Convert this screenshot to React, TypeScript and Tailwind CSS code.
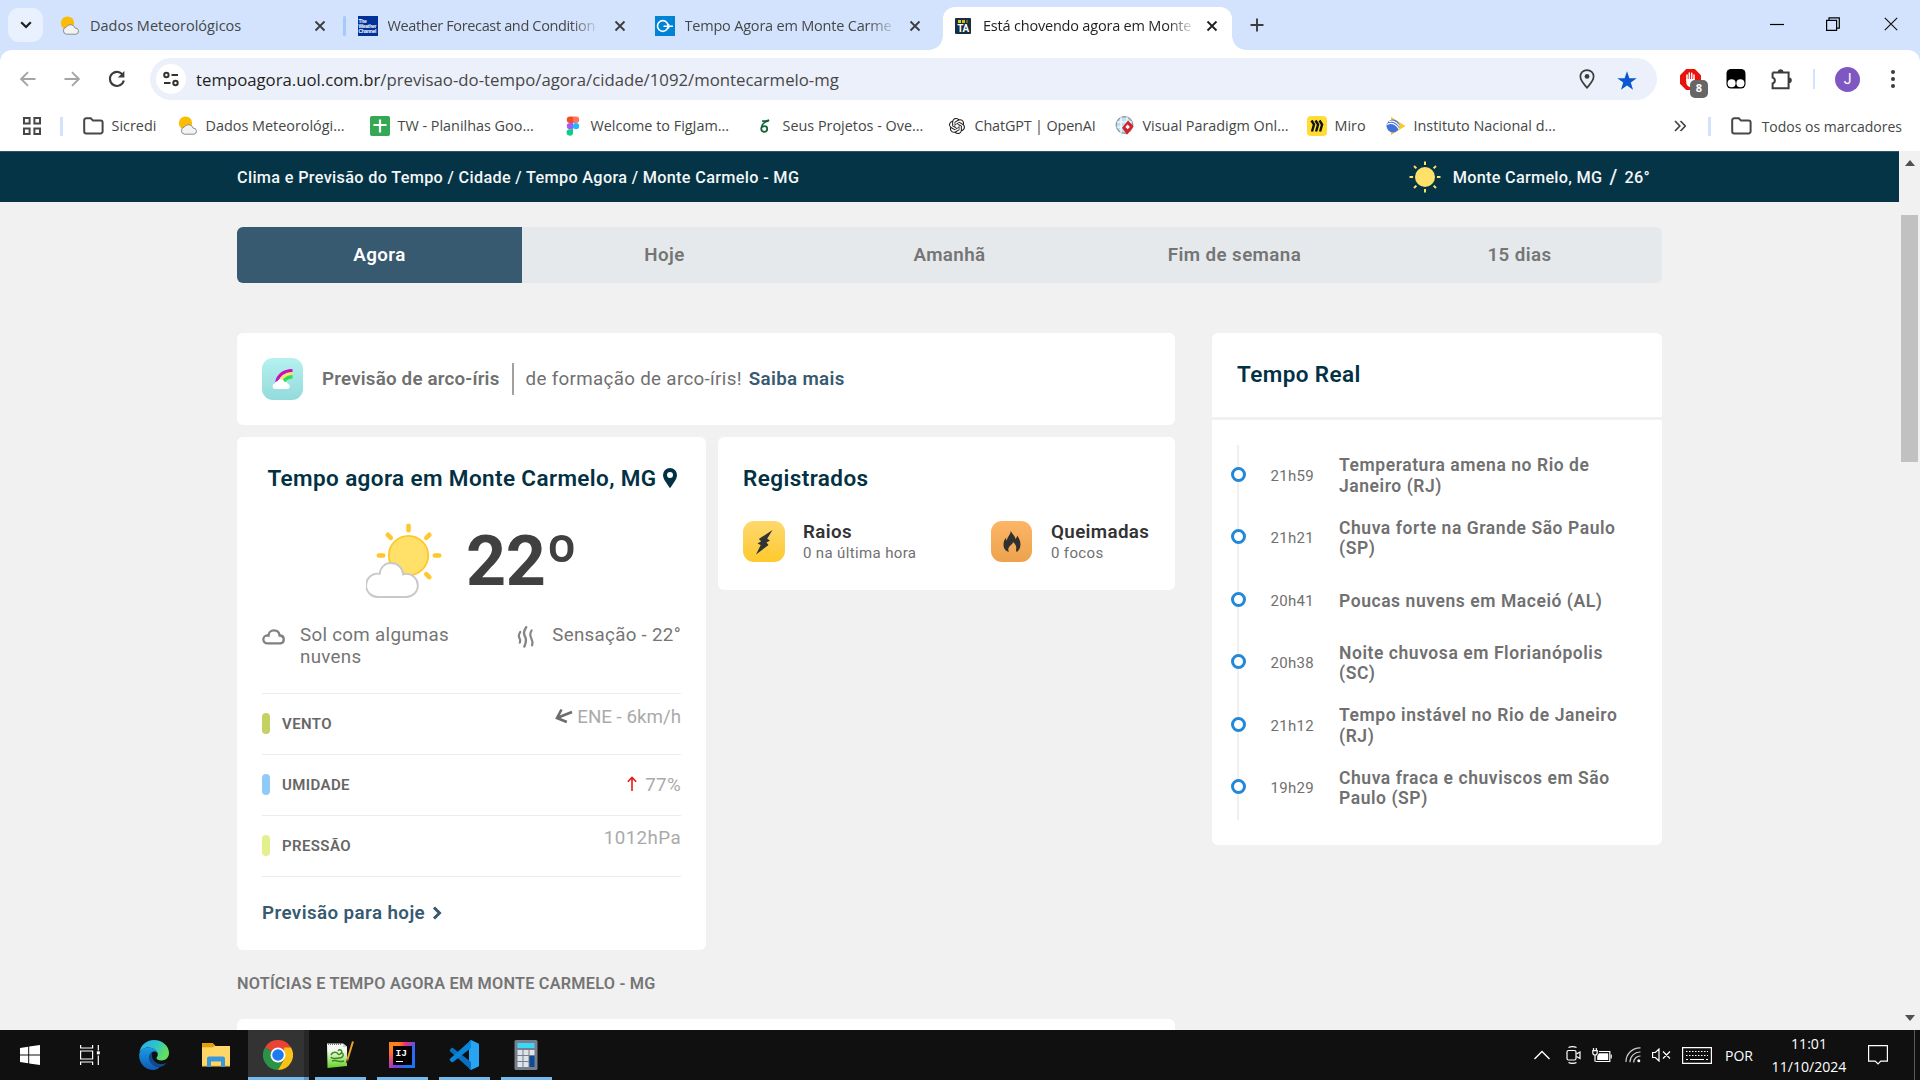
import type { ReactNode } from 'react';
import { SiOpenai } from 'react-icons/si';

const UI = "font-['Open_Sans',sans-serif]";

/* ---------- small drawings ---------- */

function SunCloudFavicon() {
  return (
    <svg viewBox="0 0 20 20" className="h-5 w-5 shrink-0">
      <circle cx="7.5" cy="7" r="6.600" fill="#fbbc04" />
      <path d="M6.500 18.200a3.600 3.600 0 0 1-.2-7.100 4.800 4.800 0 0 1 8.800 1 3.100 3.100 0 0 1 1 6.100z" fill="#f3f3f3" stroke="#8d8d8d" strokeWidth="1" />
    </svg>
  );
}

function CloseX({ className = 'text-[#3c3c3c]' }: { className?: string }) {
  return (
    <svg viewBox="0 0 12 12" className={'h-3 w-3 shrink-0 ' + className}>
      <path d="M1.500 1.500l9 9M10.500 1.500l-9 9" stroke="currentColor" strokeWidth="1.800" />
    </svg>
  );
}

function Folder() {
  return (
    <svg viewBox="0 0 21 18" className="h-[18px] w-[21px] shrink-0">
      <path d="M1.200 3.200a2 2 0 0 1 2-2h4.600l2.200 2.400h7.600a2 2 0 0 1 2 2v8.800a2 2 0 0 1-2 2H3.200a2 2 0 0 1-2-2z" fill="none" stroke="#474747" strokeWidth="2" />
    </svg>
  );
}

function WeatherChannel() {
  return (
    <div className="flex h-5 w-5 shrink-0 flex-col justify-center bg-[#003399] pl-px font-['Liberation_Sans',sans-serif] text-[5px] leading-[5px] font-bold tracking-[-0.3px] text-white">
      <span>The</span>
      <span>Weather</span>
      <span>Channel</span>
    </div>
  );
}

function Climatempo() {
  return (
    <svg viewBox="0 0 20 20" className="h-5 w-5 shrink-0">
      <path d="M0 0h20v20H0z" fill="#0083d4" />
      <circle cx="7.800" cy="10" r="5.300" fill="none" stroke="#fff" strokeWidth="1.700" />
      <path d="M8.500 10.300H18M13.600 8v4.600" stroke="#fff" strokeWidth="1.500" />
    </svg>
  );
}

function TempoAgoraIcon() {
  return (
    <div className="flex h-4 w-4 shrink-0 flex-col items-center overflow-hidden rounded-[1px] bg-[#12303f]">
      <div className="mt-[2px] flex gap-px">
        <i className="h-[3px] w-[3px] bg-[#f5c518]" />
        <i className="h-[3px] w-[3px] bg-[#e0b418]" />
        <i className="h-[3px] w-[2px] bg-[#6a6428]" />
      </div>
      <span className="mt-px font-['Roboto',sans-serif] text-[10px] leading-[10px] font-bold tracking-[-0.4px] text-white">TA</span>
    </div>
  );
}

function PartlyCloudy() {
  return (
    <svg viewBox="0 0 76 76" className="h-[76px] w-[76px] shrink-0">
      <g stroke="#ffc72e" strokeWidth="4.600" strokeLinecap="round">
        <path d="M42.500 2.800v4.400M21.800 11.800l3 3M63.300 11.800l-3 3M12.800 32.500h4.400M68.800 32.500h4.400M60.300 51.200l3 3" />
      </g>
      <circle cx="42.500" cy="32.500" r="19.700" fill="#ffe169" stroke="#ffc72e" strokeWidth="1.800" />
      <path d="M12 74a11.500 11.500 0 0 1-.5-23.400c1.200 0 1.500 0 2.200.2C14.500 44 19 40 25.300 40c6.200 0 11.400 4.800 11.900 11.400 1-.4 2-.5 3.300-.5A11.500 11.500 0 0 1 40 74z" fill="#fff" stroke="#c8c8c8" strokeWidth="1.900" />
    </svg>
  );
}

function HeaderSun() {
  return (
    <svg viewBox="0 0 32 32" className="h-8 w-8 shrink-0">
      <circle cx="16" cy="16" r="10" fill="#ffe169" />
      <path d="M16 .5v3.600M16 27.900v3.600M.5 16h3.600M27.900 16h3.600M5 5l2.400 2.400M24.600 24.600L27 27M27 5l-2.400 2.400M7.400 24.600L5 27" stroke="#ffe169" strokeWidth="2" />
    </svg>
  );
}

function CloudOutline() {
  return (
    <svg viewBox="0 0 24 18" className="h-[18px] w-6 shrink-0">
      <path d="M5.500 15.400a4 4 0 0 1-.3-8c.7 0 1 .1 1.300.2A5.400 5.400 0 0 1 12 2.400c3 0 5.200 2 5.600 5.100h.8a4 4 0 0 1 0 7.900z" fill="none" stroke="#808080" strokeWidth="2.300" />
    </svg>
  );
}

function HeatWaves() {
  return (
    <svg viewBox="0 0 18 22" className="h-[22px] w-[18px] shrink-0">
      <g fill="none" stroke="#858585" strokeLinecap="round">
        <path d="M3.200 6C1.200 9.200 1.400 10.500 2.600 12.500c.8 1.400.8 2.600.2 4.200" strokeWidth="2.200" />
        <path d="M9.200 1.200C6.300 6 6.600 8 8.200 11c1.300 2.600 1.200 5-.8 9.600" strokeWidth="2.400" />
        <path d="M14.600 4.500c-2 3.200-1.800 4.900-.5 7.300 1.300 2.500 1.900 4.400 1 7.600" strokeWidth="2.200" />
      </g>
    </svg>
  );
}

function RainbowBadge() {
  return (
    <div className="flex h-[42px] w-[41px] shrink-0 items-center justify-center rounded-[11px] bg-linear-to-b from-[#b5f1ef] to-[#93dbdb]">
      <svg viewBox="0 0 24 24" className="h-6 w-6">
        <path d="M5.500 15.500C7 9 12 4 21.500 3.600" fill="none" stroke="#cc0fb4" strokeWidth="3" />
        <path d="M8.600 15.500C10 11 14.500 7 21.500 6.600" fill="none" stroke="#fbe36a" strokeWidth="3" />
        <path d="M12 15.500C14 12 17 10 21.500 9.800" fill="none" stroke="#2ee04e" strokeWidth="3.400" />
        <path d="M3.500 22a2.800 2.800 0 0 1 .2-5.400c.8-2 2-2.700 3-2.700.5-2.100 5.600-2.400 6.600.8 2.300-.2 3.500 1.400 3.600 2.400 2.700.5 2.600 4.500 0 4.900z" fill="#fff" />
      </svg>
    </div>
  );
}

/* ---------- browser chrome ---------- */

function Tab({ icon, title }: { icon: ReactNode; title: string }) {
  return (
    <div className="flex h-full w-[297.5px] items-center pt-0.5 pl-3">
      {icon}
      <span className="ml-2.5 w-[208px] text-[14.5px] whitespace-nowrap text-[#444746]">{title}</span>
      <CloseX className="ml-[18px] text-[#3c3c3c]" />
      <i className="ml-[17px] h-5 w-[2.5px] rounded bg-[#a8c7fa]" />
    </div>
  );
}

function Faded({ children, className = '' }: { children: ReactNode; className?: string }) {
  return (
    <span className={'block tracking-[-0.2px] [mask-image:linear-gradient(to_right,black_88%,transparent_102%)] ' + className}>{children}</span>
  );
}

function TabStrip() {
  return (
    <div className="flex h-[50px] bg-[#d3e3fd]">
      <div className="mt-2 ml-2 flex h-[34px] w-[35px] items-center justify-center rounded-[11px] bg-[#e9f1fe]">
        <svg viewBox="0 0 12 8" className="h-2 w-3"><path d="M1.200 1.200L6 6l4.800-4.800" fill="none" stroke="#1f1f1f" strokeWidth="2.200" /></svg>
      </div>
      <div className="ml-[5px] flex h-[50px]">
        <Tab icon={<SunCloudFavicon />} title="Dados Meteorológicos" />
        <div className="flex h-full w-[297px] items-center pt-0.5 pl-3">
          <WeatherChannel />
          <span className="ml-2.5 w-[208px] text-[14.5px] whitespace-nowrap text-[#444746]"><Faded className="w-[208px] tracking-[-0.35px]">Weather Forecast and Condition</Faded></span>
          <CloseX className="ml-[18px] text-[#3c3c3c]" />
          <i className="ml-[17px] h-5 w-[2.5px] rounded bg-[#a8c7fa]" />
        </div>
        <div className="flex h-full w-[295.5px] items-center pt-0.5 pl-3">
          <Climatempo />
          <span className="ml-2.5 w-[208px] text-[14.5px] whitespace-nowrap text-[#444746]"><Faded className="w-[208px]">Tempo Agora em Monte Carme</Faded></span>
          <CloseX className="ml-[16px] text-[#3c3c3c]" />
        </div>
      </div>
      <div className="relative mt-[7px] ml-[5px] flex h-[43px] w-[289px] items-center rounded-t-xl bg-white pb-[5px] pl-3">
        <i className="absolute bottom-0 -left-[14px] h-[14px] w-[14px] bg-[radial-gradient(circle_at_0_0,transparent_13.5px,white_14px)]" />
        <i className="absolute -right-[14px] bottom-0 h-[14px] w-[14px] bg-[radial-gradient(circle_at_100%_0,transparent_13.5px,white_14px)]" />
        <TempoAgoraIcon />
        <span className="ml-3 w-[209px] text-[14.5px] whitespace-nowrap text-[#1f1f1f]"><Faded className="w-[209px]">Está chovendo agora em Monte</Faded></span>
        <CloseX className="ml-[14px] text-[#1f1f1f]" />
      </div>
      <svg viewBox="0 0 14 14" className="mt-[18px] ml-[18px] h-3.5 w-3.5"><path d="M7 .5v13M.5 7h13" stroke="#3c3c3c" strokeWidth="1.900" /></svg>
      <div className="ml-auto flex items-start pt-[17px] pr-[22px]">
        <svg viewBox="0 0 14 14" className="h-3.5 w-3.5"><path d="M0 7.500h14" stroke="#000" strokeWidth="1.200" /></svg>
        <svg viewBox="0 0 14 14" className="ml-[42px] h-3.5 w-3.5"><path d="M.6 3.400h10v10H.6zM3 3.400V.9h10.300v10.200h-2.700" fill="none" stroke="#000" strokeWidth="1.200" /></svg>
        <svg viewBox="0 0 14 14" className="ml-11 h-3.5 w-3.5"><path d="M.8 .8l12.400 12.400M13.200 .8L.8 13.200" stroke="#111" strokeWidth="1.200" /></svg>
      </div>
    </div>
  );
}

function Toolbar() {
  return (
    <div className="bg-[#d3e3fd]">
      <div className="flex h-[58px] items-center rounded-t-xl bg-white">
        <svg viewBox="0 0 16 16" className="ml-5 h-4 w-4"><path d="M15.500 8H1.500M8 1.200L1.200 8 8 14.800" fill="none" stroke="#a5a5a5" strokeWidth="1.900" /></svg>
        <svg viewBox="0 0 16 16" className="ml-[28px] h-4 w-4"><path d="M.5 8h14M8 1.200L14.800 8 8 14.800" fill="none" stroke="#a5a5a5" strokeWidth="1.900" /></svg>
        <svg viewBox="0 0 18 18" className="ml-7 h-[18px] w-[18px]"><path d="M15.200 5.700A7 7 0 1 0 15.800 10.500" fill="none" stroke="#3c3c3c" strokeWidth="2.100" /><path d="M16.400 1v6.600H9.800z" fill="#3c3c3c" /></svg>
        <div className="ml-6 flex h-[42px] w-[1507px] items-center rounded-full bg-[#ecf0fa]">
          <div className="ml-1.5 flex h-[30px] w-[30px] items-center justify-center rounded-full bg-white">
            <svg viewBox="0 0 16 16" className="h-4 w-4"><g fill="none" stroke="#333" strokeWidth="2"><circle cx="3.400" cy="4" r="2.200" /><path d="M8.500 4H15M1 12h6.500" /><circle cx="12.500" cy="12" r="2.200" /></g></svg>
          </div>
          <span className="mt-0.5 ml-2.5 text-[16.75px] whitespace-nowrap text-[#474747]"><span className="text-[#1f1f1f]">tempoagora.uol.com.br</span>/previsao-do-tempo/agora/cidade/1092/montecarmelo-mg</span>
          <svg viewBox="0 0 16 20" className="ml-auto h-5 w-4"><path d="M8 1.100c-3.800 0-6.600 2.800-6.600 6.400C1.400 11.800 5 15 8 18.800c3-3.800 6.600-7 6.600-11.300 0-3.600-2.800-6.400-6.600-6.400z" fill="none" stroke="#3c3c3c" strokeWidth="1.700" /><circle cx="8" cy="7.400" r="2.400" fill="#3c3c3c" /></svg>
          <svg viewBox="0 0 20 20" className="mt-1 mr-5 ml-[22px] h-5 w-5"><path d="M10 .3l2.400 6.900h7.300l-5.900 4.400 2.200 7.100L10 14.400l-6 4.300 2.200-7.100L.3 7.200h7.300z" fill="#0b57d0" /></svg>
        </div>
        <div className="relative ml-[23px] h-[21px] w-[21px]">
          <svg viewBox="0 0 21 21" className="h-[21px] w-[21px]"><path d="M6.200 0h8.600L21 6.200v8.600L14.800 21H6.200L0 14.800V6.200z" fill="#e8140c" /><path d="M7 11V6M9.300 10V4M11.700 10V4.300M14 10V6" stroke="#fff" strokeWidth="1.500" strokeLinecap="round" /><path d="M6.200 10h8.600v3.500c0 2.500-1.700 4.500-4.300 4.500s-4.300-2.500-4.300-5z" fill="#fff" /></svg>
          <div className="absolute top-[11px] left-[10px] flex h-[18px] w-[18px] items-center justify-center rounded-[5px] bg-[#666] text-[11px] font-bold text-white">8</div>
        </div>
        <svg viewBox="0 0 20 20" className="ml-[25px] h-5 w-5"><rect x=".5" width="19" height="19.500" rx="4.500" fill="#000" /><circle cx="5.600" cy="14.200" r="4" fill="#fff" /><circle cx="14.400" cy="14.200" r="4" fill="#fff" /></svg>
        <svg viewBox="0 0 22 22" className="ml-[25px] h-[22px] w-[22px]"><path d="M1.600 4.600h16v4.200M17.600 14.600v5.600h-16v-4.800a3 3 0 0 0 0-5.800V4.600M17.600 8v8" fill="none" stroke="#3c3c3c" strokeWidth="2" /><path d="M6.800 4a2.800 2.800 0 0 1 5.600 0zM18 9.400a2.800 2.800 0 0 1 0 5.600z" fill="#3c3c3c" /></svg>
        <i className="ml-5 h-5 w-0.5 bg-[#d3e3fd]" />
        <div className="ml-5 flex h-[25px] w-[25px] items-center justify-center rounded-full bg-[#7e57c2] font-['Roboto',sans-serif] text-[14px] text-white">J</div>
        <svg viewBox="0 0 4 18" className="ml-[31px] h-[18px] w-1"><g fill="#3c3c3c"><circle cx="2" cy="2" r="2" /><circle cx="2" cy="9" r="2" /><circle cx="2" cy="16" r="2" /></g></svg>
      </div>
    </div>
  );
}

function Bookmark({ icon, label, width }: { icon: ReactNode; label: string; width: string }) {
  return (
    <div className={'flex shrink-0 items-center text-[14.4px] whitespace-nowrap text-[#444746] ' + width}>
      <span className="mr-2 flex w-5 justify-center">{icon}</span>
      {label}
    </div>
  );
}

function BookmarksBar() {
  return (
    <div className="flex h-[43px] items-center bg-white pb-[7px]">
      <svg viewBox="0 0 18 18" className="ml-[23px] h-[18px] w-[18px] shrink-0"><g fill="none" stroke="#474747" strokeWidth="2"><path d="M1 1h5.600v5.600H1zM11.400 1H17v5.600h-5.600zM1 11.400h5.600V17H1zM11.400 11.400H17V17h-5.600z" /></g></svg>
      <i className="ml-[19px] h-[19px] w-[2.5px] bg-[#d3e3fd]" />
      <div className="ml-[19px] flex items-center">
        <Bookmark icon={<Folder />} label="Sicredi" width="w-[96px] pl-0.5" />
        <Bookmark icon={<SunCloudFavicon />} label="Dados Meteorológi..." width="w-[192px]" />
        <Bookmark
          icon={<svg viewBox="0 0 20 20" className="h-5 w-5"><rect width="20" height="20" rx="2" fill="#34a853" /><path d="M10 3.500v13M3.500 9h13" stroke="#fff" strokeWidth="2.200" /></svg>}
          label="TW - Planilhas Goo..." width="w-[193px]"
        />
        <Bookmark
          icon={<svg viewBox="0 0 14 20" className="h-5 w-3.5"><path d="M7 .5H4a3.200 3.200 0 0 0 0 6.400h3z" fill="#f24e1e" /><path d="M7 .5h3a3.200 3.200 0 0 1 0 6.400H7z" fill="#ff7262" /><path d="M7 6.900H4a3.200 3.200 0 0 0 0 6.400h3z" fill="#a259ff" /><circle cx="10" cy="10.100" r="3.200" fill="#1abcfe" /><path d="M7 13.300H4A3.200 3.200 0 1 0 7 16.500z" fill="#0acf83" /></svg>}
          label="Welcome to FigJam..." width="w-[192px]"
        />
        <Bookmark
          icon={<svg viewBox="0 0 14 18" className="h-[14px] w-[11px]"><path d="M12.500 2.500C7 3.500 3 7.500 2.800 12c0 3 1.600 4.500 3.700 4.500 2.400 0 4-1.800 4-4 0-2-1.400-3.400-3.300-3.400-1.200 0-2.400.6-3.100 1.500M4 2.200c2 1 5 1 9-.8" fill="none" stroke="#13643a" strokeWidth="2.300" /></svg>}
          label="Seus Projetos - Ove..." width="w-[192px]"
        />
        <div className="tracking-[-0.15px]">
          <Bookmark icon={<SiOpenai className="h-4 w-4 text-[#202020]" />} label="ChatGPT | OpenAI" width="w-[168px]" />
        </div>
        <Bookmark
          icon={<svg viewBox="0 0 20 20" className="h-5 w-5"><circle cx="9.500" cy="9" r="8.300" fill="#b9e2f7" stroke="#8f8f8f" strokeWidth="1.200" /><path d="M1.500 6h16M1.500 11h16M6 1v16M12 1v16" stroke="#fff" strokeWidth="1.100" /><path d="M13 4.600l5.600 5.600-6.600 8.600-5-7z" fill="#d2232a" /><path d="M12.600 8.600l2.300 2.300-2.300 2.300-2.200-2.300z" fill="#fff" /></svg>}
          label="Visual Paradigm Onl..." width="w-[192px]"
        />
        <Bookmark
          icon={<svg viewBox="0 0 20 20" className="h-5 w-5"><rect width="20" height="20" rx="4" fill="#ffdd33" /><path d="M4.500 4.500l2.500 4-2 7M8.500 4.500l2.600 4-2 7M12.500 4.500l2.600 4-2 7" fill="none" stroke="#111" strokeWidth="2.400" /></svg>}
          label="Miro" width="w-[79px]"
        />
        <Bookmark
          icon={<svg viewBox="0 0 20 20" className="h-5 w-5"><path d="M5 1l14.500 9L5 19z" fill="#f7c92b" /><circle cx="7" cy="10" r="6.500" fill="#4472d8" /><path d="M1 8.500c5-2.500 9 0 12 4.500M3 5.500c5-1.500 8 1 10.500 5" fill="none" stroke="#fff" strokeWidth="1.200" /></svg>}
          label="Instituto Nacional d..." width="w-[200px]"
        />
      </div>
      <svg viewBox="0 0 12 12" className="mr-[22px] ml-auto h-3 w-3 shrink-0"><path d="M1 1l4.800 5L1 11M6.500 1l4.800 5-4.800 5" fill="none" stroke="#444" strokeWidth="1.700" /></svg>
      <i className="mr-5 h-[19px] w-[2.5px] bg-[#d3e3fd]" />
      <Folder />
      <span className="mr-[18px] ml-[10px] text-[14px] whitespace-nowrap text-[#444746]">Todos os marcadores</span>
    </div>
  );
}

/* ---------- weather page ---------- */

const NEWS = [
  { time: '21h59', text: 'Temperatura amena no Rio de Janeiro (RJ)' },
  { time: '21h21', text: 'Chuva forte na Grande São Paulo (SP)' },
  { time: '20h41', text: 'Poucas nuvens em Maceió (AL)' },
  { time: '20h38', text: 'Noite chuvosa em Florianópolis (SC)' },
  { time: '21h12', text: 'Tempo instável no Rio de Janeiro (RJ)' },
  { time: '19h29', text: 'Chuva fraca e chuviscos em São Paulo (SP)' },
];

function RealTime() {
  return (
    <aside className="ml-[37px] h-[512px] w-[450px] rounded-[6px] bg-white">
      <h2 className="flex h-[87px] items-center border-b-[3px] border-[#f1f1f1] pb-px pl-[25px] text-[22.5px] font-semibold tracking-[0.4px] text-[#033144]">Tempo Real</h2>
      <div className="mt-[25px] ml-[25px] border-l-2 border-[#efefef]">
        {NEWS.map((n) => (
          <div key={n.text} className="flex h-[62.5px] items-center">
            <i className="relative -top-[2px] -ml-[8.5px] h-[15px] w-[15px] rounded-full border-[3px] border-[#2488d8] bg-white" />
            <span className="ml-[25px] w-[68.5px] pb-px text-[15px] tracking-[0.3px] text-[#707070]">{n.time}</span>
            <span className="w-[300px] pb-px text-[17.5px] leading-[20.5px] font-semibold tracking-[0.56px] text-[#707070]">{n.text}</span>
          </div>
        ))}
      </div>
    </aside>
  );
}

function DataRow({ color, label, children }: { color: string; label: string; children: ReactNode }) {
  return (
    <div className="flex h-[61px] border-t border-[#ececec]">
      <i className={'mt-[19px] h-[21px] w-2 rounded-full ' + color} />
      <span className="mt-[20px] ml-3 text-[15px] leading-5 font-semibold tracking-[0.4px] text-[#666]">{label}</span>
      <div className="ml-auto flex text-[18.75px] leading-[22px] text-[#aaa]">{children}</div>
    </div>
  );
}

function CurrentCard() {
  return (
    <section className="h-[513px] w-[469px] rounded-[6px] bg-white px-[25px]">
      <h1 className="flex items-center justify-center gap-[6px] pt-[27px] pl-[1px] text-[22.5px] leading-7 font-semibold tracking-[0.38px] whitespace-nowrap text-[#033144]">
        Tempo agora em Monte Carmelo, MG
        <svg viewBox="0 0 14 20" className="h-5 w-3.5"><path fillRule="evenodd" d="M7 0a7 7 0 0 0-7 7c0 2.600 1.200 4.600 2.600 6.800L6.400 19.600a.75.75 0 0 0 1.200 0l3.800-5.800C12.800 11.600 14 9.600 14 7a7 7 0 0 0-7-7zM7 4a3 3 0 1 1 0 6 3 3 0 0 1 0-6z" fill="#033144" /></svg>
      </h1>
      <div className="mt-[31px] ml-[104px] flex h-[76px]">
        <PartlyCloudy />
        <span className="-mt-[3px] ml-[24px] text-[70px] leading-[82px] font-bold tracking-[-0.3px] text-[#404040]">22º</span>
      </div>
      <div className="mt-[26px] flex h-[57px] text-[18.75px] leading-[21.5px] tracking-[0.3px] text-[#757575]">
        <div className="mt-[3px]"><CloudOutline /></div>
        <p className="ml-3.5 w-[160px]">Sol com algumas nuvens</p>
        <div className="mt-[1px] ml-[57px]"><HeatWaves /></div>
        <p className="ml-auto whitespace-nowrap">Sensação - 22°</p>
      </div>
      <div className="mt-[11px] border-b border-[#ececec]">
        <DataRow color="bg-[#c5d163]" label="VENTO">
          <svg viewBox="0 0 18 16" className="mt-3.5 mr-1 h-4 w-[18px]"><path d="M6.500 1.500L2 10l9.800 4M2.500 9.800L17 4" fill="none" stroke="#6c6c6c" strokeWidth="2.600" /></svg>
          <span className="mt-3">ENE - 6km/h</span>
        </DataRow>
        <DataRow color="bg-[#90caf9]" label="UMIDADE">
          <svg viewBox="0 0 10 15" className="mt-[21px] mr-2 h-[15px] w-2.5"><path d="M5 15V1.500M.8 5.800L5 1.400l4.200 4.400" fill="none" stroke="#e31b1b" strokeWidth="1.600" /></svg>
          <span className="mt-[19px] tracking-[0.3px]">77%</span>
        </DataRow>
        <DataRow color="bg-[#e4f08c]" label="PRESSÃO">
          <span className="mt-[11px] tracking-[0.4px]">1012hPa</span>
        </DataRow>
      </div>
      <a className="mt-[24px] flex items-center text-[18.75px] leading-6 font-semibold tracking-[0.42px] text-[#375a70]">
        Previsão para hoje
        <svg viewBox="0 0 10 14" className="ml-[7px] h-3.5 w-2.5"><path d="M2 1.500L7.500 7 2 12.500" fill="none" stroke="#375a70" strokeWidth="3" /></svg>
      </a>
    </section>
  );
}

function Recorded() {
  return (
    <section className="ml-3 h-[153px] w-[457px] rounded-[6px] bg-white px-[25px] pt-[27px]">
      <h2 className="text-[22.5px] leading-7 font-semibold tracking-[0.42px] text-[#033144]">Registrados</h2>
      <div className="mt-[28px] flex">
        <div className="flex w-[248px]">
          <div className="mt-px flex h-[41px] w-[42px] items-center justify-center rounded-[11px] bg-linear-to-b from-[#fdd96b] to-[#fec928]">
            <svg viewBox="0 0 18 26" className="h-[26px] w-[18px]"><path d="M17.500 1L3.800 10l2.400 2.200L2.500 14.500l3.200 1.500L1 25.500l12.500-9.500-2-2.400L15 11.400l-2.800-1.600z" fill="#333" /></svg>
          </div>
          <div className="mt-px ml-[18px]">
            <p className="text-[18.75px] leading-[22px] font-semibold tracking-[0.4px] text-[#333]">Raios</p>
            <p className="text-[15px] leading-5 tracking-[0.36px] text-[#707070]">0 na última hora</p>
          </div>
        </div>
        <div className="mt-px flex h-[41px] w-[41px] items-center justify-center rounded-[11px] bg-linear-to-b from-[#fdb566] to-[#eda34d]">
          <svg viewBox="0 0 18 23" className="h-[23px] w-[18px]"><path d="M7.800.5c.5 3 4.200 5 4.700 8.500.9-.9 1.500-2 1.600-3.500 2 2.400 3.400 5.700 3.400 9 0 3.800-1.700 6-3.700 7.600-.8-.9-.9-2-.6-3.500.4-2.700-1-4.700-3.200-6.600.1 2.500-4.700 4-4.700 7.500 0 1 .2 1.800.5 2.600C2.700 20.700.5 18.600.5 14.700c0-3.200 1-5 2.300-7 .1 1.200.4 2 1.100 2.700C4.300 6.500 8 4.500 7.800.5z" fill="#303030" /></svg>
        </div>
        <div className="mt-px ml-[19px]">
          <p className="text-[18.75px] leading-[22px] font-semibold tracking-[0.37px] text-[#333]">Queimadas</p>
          <p className="text-[15px] leading-5 tracking-[0.35px] text-[#707070]">0 focos</p>
        </div>
      </div>
    </section>
  );
}

function WeatherPage() {
  return (
    <div className="flex h-[879px] bg-[#f1f1f1]">
      <main className="flex h-[879px] w-[1899px] flex-col overflow-hidden font-['Roboto',sans-serif]">
        <header className="flex h-[51px] shrink-0 items-center border-t border-[#2c5464] bg-[#043446] pl-[237px] text-[16.25px] font-medium tracking-[0.32px] text-[#f4f6f7]">
          <span className="mt-0.5">Clima e Previsão do Tempo / Cidade / Tempo Agora / Monte Carmelo - MG</span>
          <div className="mr-[249px] ml-auto flex items-center tracking-[0.28px]">
            <HeaderSun />
            <span className="mt-0.5 ml-3">Monte Carmelo, MG</span>
            <span className="mx-[7px] text-[20px] leading-6">/</span>
            <span className="mt-0.5">26°</span>
          </div>
        </header>
        <div className="ml-[237px] w-[1425px]">
          <nav className="mt-[25px] grid h-14 grid-cols-5 overflow-hidden rounded-[6px] bg-[#e5e9ec] text-center text-[18.75px] leading-[57px] font-semibold tracking-[0.4px] text-[#757575]">
            <span className="bg-[#375a70] text-white">Agora</span>
            <span>Hoje</span>
            <span>Amanhã</span>
            <span>Fim de semana</span>
            <span>15 dias</span>
          </nav>
          <div className="mt-[50px] flex items-start">
            <div className="w-[938px]">
              <section className="flex h-[92px] items-center rounded-[6px] bg-white pl-[25px] text-[18.75px] tracking-[0.33px] whitespace-nowrap text-[#707070]">
                <RainbowBadge />
                <span className="ml-[19px] font-semibold tracking-[0.2px]">Previsão de arco-íris</span>
                <i className="ml-3 h-8 w-0.5 bg-[#a0a0a0]" />
                <span className="ml-3">de formação de arco-íris!</span>
                <span className="ml-[7px] font-semibold text-[#375a70]">Saiba mais</span>
              </section>
              <div className="mt-3 flex items-start">
                <CurrentCard />
                <Recorded />
              </div>
              <h2 className="mt-[24px] text-[16.25px] leading-5 font-semibold tracking-[0.23px] text-[#757575]">NOTÍCIAS E TEMPO AGORA EM MONTE CARMELO - MG</h2>
              <section className="mt-[25px] h-20 rounded-[6px] bg-white" />
            </div>
            <RealTime />
          </div>
        </div>
      </main>
      <div className="flex w-[21px] flex-col items-center bg-[#f1f1f1]">
        <svg viewBox="0 0 10 6" className="mt-[9px] h-1.5 w-2.5 shrink-0"><path d="M5 0l5 6H0z" fill="#505050" /></svg>
        <div className="mt-[49px] h-[247px] w-[17px] shrink-0 bg-[#c1c1c1]" />
        <svg viewBox="0 0 10 6" className="mt-auto mb-[9px] h-1.5 w-2.5"><path d="M0 0h10L5 6z" fill="#505050" /></svg>
      </div>
    </div>
  );
}

/* ---------- taskbar ---------- */

function EdgeIcon() {
  return (
    <svg viewBox="0 0 30 30" className="h-[30px] w-[30px]">
      <defs>
        <linearGradient id="edgeTop" x1="0" y1="0" x2="1" y2=".4"><stop offset="0" stopColor="#2fa8e8" /><stop offset=".55" stopColor="#2cc3cf" /><stop offset="1" stopColor="#63e05a" /></linearGradient>
        <linearGradient id="edgeLow" x1="0" y1="0" x2="0" y2="1"><stop offset="0" stopColor="#1b9de2" /><stop offset="1" stopColor="#0f59b5" /></linearGradient>
      </defs>
      <path d="M.4 13C1.300 5.500 7 0 15 0c8.500 0 15 6 15 13 0 4.500-3.300 7.500-7.500 7.500-3.200 0-5-1.300-5-2.300s1.300-1.400 1.300-3.900C18.800 10.500 14 7.500 9.500 7.500 5 7.500 1.500 10 .4 13z" fill="url(#edgeTop)" />
      <path d="M.2 15C.5 10.500 4.500 7.500 9.500 7.500c4.800 0 8.400 2.700 9.200 5.500-1.200-1.500-3.400-2-5-1.200-5 2.500-4.500 11.500 3.500 14.700 1 .4 2.300.6 3.300.5C18.800 29.200 16.500 30 14.500 30 6.500 30-.2 23.500.2 15z" fill="url(#edgeLow)" />
      <path d="M13.500 11.900c-5.500 2.600-4.600 12.300 4.200 14.900 3.800 1.100 7.500-.6 10-4-2 1-4.200 1.500-6.400 1.200-5.800-.5-10-6.500-7.800-12.100z" fill="#114a8b" />
    </svg>
  );
}

function ChromeIcon() {
  return (
    <svg viewBox="0 0 30 30" className="h-[30px] w-[30px]">
      <path d="M15 15L2 7.500A15 15 0 0 1 28 7.500z" fill="#ea4335" />
      <path d="M2 7.500A15 15 0 0 0 15 30l6.500-11.200L15 15z" fill="#2b9347" />
      <path d="M28 7.500A15 15 0 0 1 15 30l6.500-11.200L21 7.500z" fill="#fbc116" />
      <circle cx="15" cy="15" r="7.500" fill="#fff" />
      <circle cx="15" cy="15" r="5.800" fill="#1f7af0" />
    </svg>
  );
}

function NotepadIcon() {
  return (
    <svg viewBox="0 0 28 28" className="h-7 w-7">
      <defs><linearGradient id="npp" x1="0" y1="0" x2="0" y2="1"><stop offset=".3" stopColor="#f4f8f0" /><stop offset="1" stopColor="#5ed21f" /></linearGradient></defs>
      <path d="M1 2.500h16l4 3V25L1.500 27z" fill="url(#npp)" />
      <path d="M2 3h14" stroke="#777" strokeWidth="2.200" strokeDasharray="1 1" />
      <path d="M17 2.500v3.500h4z" fill="#ccc" />
      <path d="M5 14c2-4 6-3 7-1s4-3 5 0-2 4-4 4-7 2-8-1M6 20c4-2 7 2 12 0M12 10c2-3 5 0 3 2" fill="none" stroke="#3c8a1b" strokeWidth="1.500" />
      <path d="M27 .5L21 20" stroke="#e9a12c" strokeWidth="2" />
      <path d="M21.400 18.500l-1 3.500" stroke="#5b3b12" strokeWidth="1.300" />
    </svg>
  );
}

function IntelliJIcon() {
  return (
    <div className="flex h-[26px] w-[26px] items-center justify-center bg-[conic-gradient(from_-60deg,#fc801d,#fc801d_12%,#f0287a_22%,#3a62f5_32%,#1279f5_60%,#8a36e0_75%,#fc5a4a_90%,#fc801d)]">
      <div className="flex h-[19px] w-[19px] flex-col bg-black pt-[3px] pl-[3px] font-['Liberation_Mono',monospace] text-[9.5px] leading-[9px] font-bold text-white">
        IJ
        <i className="mt-[3px] h-px w-[7px] shrink-0 bg-white" />
      </div>
    </div>
  );
}

function VSCodeIcon() {
  return (
    <svg viewBox="0 0 30 30" className="h-[30px] w-[30px]">
      <path d="M22 0l7 3.200c.6.300 1 .8 1 1.500v20.600c0 .7-.4 1.200-1 1.500L22 30l-2-1.500v-27z" fill="#27a5f2" />
      <path d="M22 30L1 11.200c-.5-.5-.5-1.200 0-1.700l1.500-1.400c.5-.4 1-.4 1.500 0L22 22z" fill="#0a6fc0" />
      <path d="M22 0L1 18.800c-.5.500-.5 1.200 0 1.700l1.500 1.400c.5.400 1 .4 1.500 0L22 8z" fill="#0a86d8" />
    </svg>
  );
}

function CalculatorIcon() {
  return (
    <svg viewBox="0 0 24 30" className="h-[30px] w-6">
      <rect x=".5" width="23" height="30" rx="1.500" fill="#75808c" />
      <path d="M3.500 3h17v5h-17z" fill="#3fd5f8" />
      <g fill="#dfe4ea"><path d="M3.500 10h5v5h-5zM9.500 10h5v5h-5zM15.500 10h5v5h-5zM3.500 16h5v5h-5zM9.500 16h5v5h-5zM3.500 22h5v5h-5zM9.500 22h5v5h-5z" /></g>
      <path d="M15.500 16h5v11h-5z" fill="#0f4a94" />
    </svg>
  );
}

function RunningApp({ children }: { children: ReactNode }) {
  return (
    <div className="flex h-full w-[62px] flex-col items-center">
      <div className="flex h-[47px] items-center pt-[3px]">{children}</div>
      <i className="h-[3px] w-[51px] bg-[#76b9ed]" />
    </div>
  );
}

function Taskbar() {
  return (
    <footer className="flex h-[50px] bg-[#101010] text-white">
      <div className="flex w-[60px] items-center justify-center">
        <svg viewBox="0 0 20 20" className="h-5 w-5"><path d="M0 3l8.200-1.200v7.700H0zM9.200 1.600L20 0v9.500H9.200zM0 10.500h8.200v7.700L0 17zM9.200 10.500H20V20L9.200 18.400z" fill="#fff" /></svg>
      </div>
      <div className="flex w-[60px] items-center justify-center">
        <svg viewBox="0 0 20 20" className="h-5 w-5" fill="none" stroke="#fff" strokeWidth="1.200"><path d="M.6 0v3h12V0M.6 6h12v8H.6zM.6 20v-3h12v3M18.300 0v5.500M18.300 10.500V20" /><path d="M16.800 6.300h3v3h-3z" fill="#fff" stroke="none" /></svg>
      </div>
      <div className="flex w-[68px] items-center justify-center"><EdgeIcon /></div>
      <div className="flex w-[60px] items-center justify-center pr-1">
        <svg viewBox="0 0 28 24" className="h-6 w-7"><path d="M0 0h10.500l3 3H28v20.500H0z" fill="#ffc83d" /><path d="M0 0h10.500l2.500 2.500L11 4.500H0z" fill="#e3a008" /><path d="M0 4.500h11l2-1.500h15v19H0z" fill="#ffd766" /><path d="M5 24V15.500A2 2 0 0 1 7 13.500h14a2 2 0 0 1 2 2V24h-4v-5.500H9V24z" fill="#3a96dd" /></svg>
      </div>
      <div className="flex w-[61px]">
        <div className="flex h-full w-14 flex-col border-b-[3px] border-[#76b9ed] bg-[#333] pt-[10px] pl-[15px]"><ChromeIcon /></div>
        <div className="h-full w-[5px] border-b-[3px] border-[#5f95c0] bg-[#272727]" />
      </div>
      <RunningApp><NotepadIcon /></RunningApp>
      <RunningApp><IntelliJIcon /></RunningApp>
      <RunningApp><VSCodeIcon /></RunningApp>
      <RunningApp><CalculatorIcon /></RunningApp>
      <div className="ml-auto flex items-center">
        <svg viewBox="0 0 16 10" className="h-2.5 w-4" fill="none" stroke="#fff" strokeWidth="1.400"><path d="M.5 9L8 1.500 15.500 9" /></svg>
        <svg viewBox="0 0 15 18" className="ml-4 h-[18px] w-[15px]" fill="none" stroke="#fff" strokeWidth="1.200"><rect x="1" y="4.500" width="9" height="9.500" rx="1.500" /><path d="M10.500 8l3.500-2v6.500l-3.500-2M2.500 1.500C4.500 .3 8.500.3 10.500 1.500M2.500 16.500c2 1.200 6 1.200 8 0" /></svg>
        <svg viewBox="0 0 20 15" className="ml-[11px] h-[15px] w-5" fill="none" stroke="#fff" strokeWidth="1.200"><path d="M7 3.500h10.800v10H3.500" /><path d="M7 5.300h9.200v6.600H5.200V8z" fill="#fff" stroke="none" /><path d="M19.200 6.500v4M1.500 0v2.500M4.300 0v2.500M.8 2.600h4.400v2.200a2.200 2.200 0 0 1-4.400 0zM3 7v6.500" /></svg>
        <svg viewBox="0 0 16 16" className="ml-[13px] h-4 w-4" fill="none" stroke="#ccc" strokeWidth="1.200"><path d="M1 15A14 14 0 0 1 15.500.8M5 15.300A10 10 0 0 1 15.500 5M8.700 15.500a6.500 6.500 0 0 1 6.800-6.500" /><circle cx="13.800" cy="13.800" r="1.500" fill="#fff" stroke="none" /></svg>
        <svg viewBox="0 0 19 14" className="ml-[11px] h-3.5 w-[19px]" fill="none" stroke="#fff" strokeWidth="1.200"><path d="M.6 4.500h2.800L7 1v12L3.400 9.500H.6zM11 3.500l7 7M18 3.500l-7 7" /></svg>
        <svg viewBox="0 0 30 17" className="ml-[11px] h-[17px] w-[30px]" fill="none" stroke="#fff" strokeWidth="1.200"><path d="M.6.6h28.800v15.800H.6z" /><path d="M4 4.500h22M4 8.500h22" strokeDasharray="1.500 1.500" /><path d="M4 12.500h2M8 12.500h14M24 12.500h2" /></svg>
        <span className="ml-[13px] w-[29px] text-[14px]">POR</span>
        <div className="ml-[15px] w-20 text-center text-[14.1px] leading-[23px]">
          <div>11:01</div>
          <div>11/10/2024</div>
        </div>
        <svg viewBox="0 0 20 20" className="ml-[19px] h-5 w-5" fill="none" stroke="#fff" strokeWidth="1.200"><path d="M.6.6h18.800v15.600h-6.600L10 19l-2.800-2.800H.6z" /></svg>
        <i className="mr-[5px] ml-[26px] h-[50px] w-px bg-[#5a5a5a]" />
      </div>
    </footer>
  );
}

export default function App() {
  return (
    <div className={'h-[1080px] w-[1920px] overflow-hidden bg-white ' + UI}>
      <TabStrip />
      <Toolbar />
      <BookmarksBar />
      <WeatherPage />
      <Taskbar />
    </div>
  );
}
